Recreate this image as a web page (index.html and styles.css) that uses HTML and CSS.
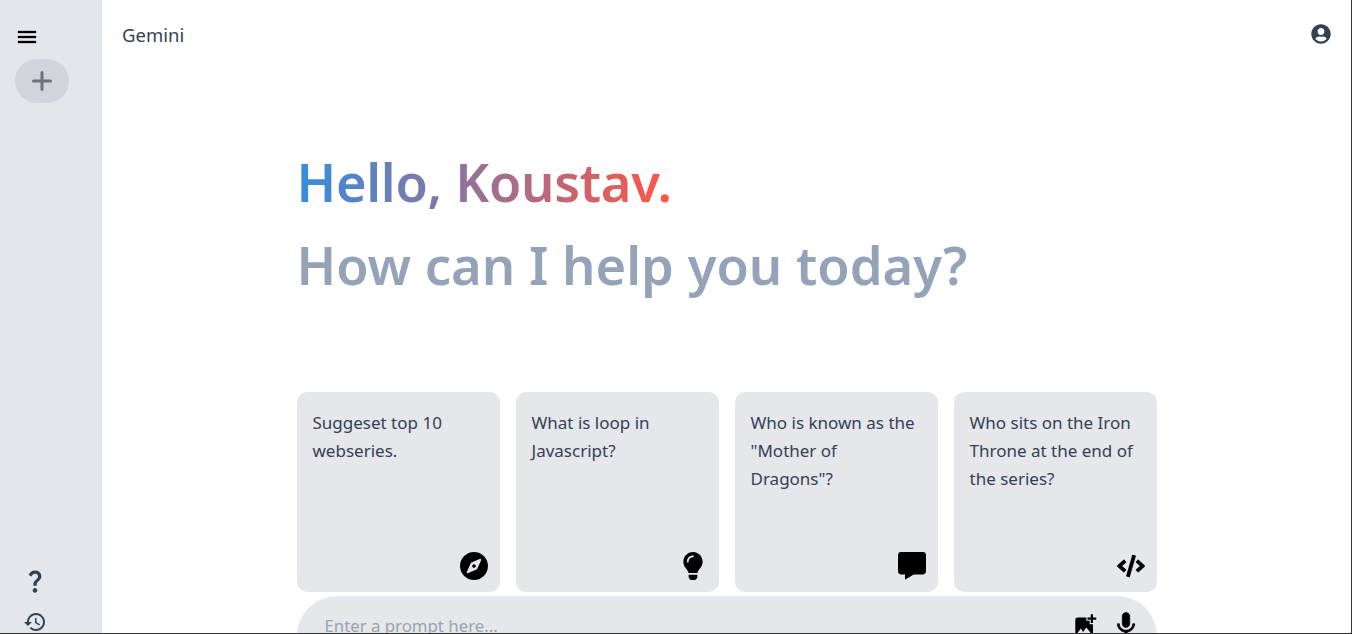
FILE: index.html
```html
<!DOCTYPE html>
<html lang="en">
<head>
    <meta charset="UTF-8">
    <meta name="viewport" content="width=device-width, initial-scale=1.0">
    <title>Gemini</title>
    <link rel="stylesheet" href="styles.css">
</head>
<body>

    <div class="app">
        <aside class="sidebar">
            <div class="side-top">
                <svg class="menu-icon" viewBox="0 0 24 24"><path d="M3 18h18v-2H3v2zm0-5h18v-2H3v2zm0-7v2h18V6H3z"/></svg>
                <button class="new-chat">
                    <svg viewBox="0 0 20 20"><path d="M10 1.5v17M1.5 10h17"/></svg>
                </button>
            </div>
            <div class="side-bottom">
                <svg class="help-icon" viewBox="0 0 24 24"><path d="M11.07,12.85c0.77-1.39,2.25-2.21,3.11-3.44c0.91-1.29,0.4-3.7-2.18-3.7c-1.69,0-2.52,1.28-2.87,2.34L6.54,6.96 C7.25,4.83,9.18,3,11.99,3c2.35,0,3.96,1.07,4.78,2.41c0.7,1.15,1.11,3.3,0.03,4.9c-1.2,1.77-2.35,2.31-2.97,3.45 c-0.25,0.46-0.35,0.76-0.35,2.24h-2.89C10.58,15.22,10.46,13.95,11.07,12.85z M14,20c0,1.1-0.9,2-2,2s-2-0.9-2-2c0-1.1,0.9-2,2-2 S14,18.9,14,20z"/></svg>
                <svg class="history-icon" viewBox="0 0 24 24"><path d="M13 3c-4.97 0-9 4.03-9 9H1l3.89 3.89.07.14L9 12H6c0-3.87 3.13-7 7-7s7 3.13 7 7-3.13 7-7 7c-1.93 0-3.68-.79-4.94-2.06l-1.42 1.42C8.27 19.99 10.51 21 13 21c4.97 0 9-4.03 9-9s-4.03-9-9-9zm-1 5v5l4.28 2.54.72-1.21-3.5-2.08V8H12z"/></svg>
            </div>
        </aside>

        <main class="main">
            <nav class="topbar">
                <p class="brand">Gemini</p>
                <svg class="user-icon" viewBox="0 0 496 512"><path d="M248 8C111 8 0 119 0 256s111 248 248 248 248-111 248-248S385 8 248 8zm0 96c48.6 0 88 39.4 88 88s-39.4 88-88 88-88-39.4-88-88 39.4-88 88-88zm0 344c-58.7 0-111.3-26.6-146.5-68.2 18.8-35.4 55.6-59.8 98.5-59.8 2.4 0 4.8.4 7.1 1.1 13 4.2 26.6 6.9 40.9 6.9 14.3 0 28-2.7 40.9-6.9 2.3-.7 4.7-1.1 7.1-1.1 42.9 0 79.7 24.4 98.5 59.8C359.3 421.4 306.7 448 248 448z"/></svg>
            </nav>

            <div class="content">
                <div class="greet">
                    <p class="hello"><span>Hello, Koustav.</span></p>
                    <p class="ask">How can I help you today?</p>
                </div>

                <div class="cards">
                    <div class="card">
                        <p>Suggeset top 10 webseries.</p>
                        <svg class="card-icon" viewBox="0 8 496 496"><path d="M225.38 233.37c-12.5 12.5-12.5 32.76 0 45.25 12.49 12.5 32.76 12.5 45.25 0 12.5-12.5 12.5-32.76 0-45.25-12.5-12.49-32.76-12.49-45.25 0zM248 8C111 8 0 119 0 256s111 248 248 248 248-111 248-248S385 8 248 8zm126.14 148.05L308.17 300.4a31.938 31.938 0 0 1-15.77 15.77l-144.34 65.97c-16.65 7.61-33.81-9.55-26.2-26.2l65.98-144.35a31.938 31.938 0 0 1 15.77-15.77l144.34-65.97c16.65-7.6 33.8 9.55 26.19 26.2z"/></svg>
                    </div>
                    <div class="card">
                        <p>What is loop in Javascript?</p>
                        <svg class="card-icon" viewBox="-80 0 512 512"><path d="M96.06 454.35c.01 6.29 1.87 12.45 5.36 17.69l17.09 25.69a31.99 31.99 0 0 0 26.64 14.28h61.71a31.99 31.99 0 0 0 26.64-14.28l17.09-25.69a31.989 31.989 0 0 0 5.36-17.69l.04-38.35H96.01l.05 38.35zM0 176c0 44.37 16.45 84.85 43.56 115.78 16.52 18.85 42.36 58.23 52.21 91.45.04.26.07.52.11.78h160.24c.04-.26.07-.51.11-.78 9.85-33.22 35.69-72.6 52.21-91.45C335.55 260.85 352 220.37 352 176 352 78.61 272.91-.3 175.45 0 73.44.31 0 82.97 0 176zm176-80c-44.11 0-80 35.89-80 80 0 8.84-7.16 16-16 16s-16-7.16-16-16c0-61.76 50.24-112 112-112 8.84 0 16 7.16 16 16s-7.16 16-16 16z"/></svg>
                    </div>
                    <div class="card">
                        <p>Who is known as the "Mother of Dragons"?</p>
                        <svg class="card-icon" viewBox="2 2 20 20"><path d="M20 2H4c-1.103 0-2 .897-2 2v12c0 1.103.897 2 2 2h3v3.767L13.277 18H20c1.103 0 2-.897 2-2V4c0-1.103-.897-2-2-2z"/></svg>
                    </div>
                    <div class="card">
                        <p>Who sits on the Iron Throne at the end of the series?</p>
                        <svg class="card-icon" viewBox="0 0 640 512"><path d="M278.9 511.5l-61-17.7c-6.4-1.8-10-8.5-8.2-14.9L346.2 8.7c1.8-6.4 8.5-10 14.9-8.2l61 17.7c6.4 1.8 10 8.5 8.2 14.9L293.8 503.3c-1.9 6.4-8.5 10.1-14.9 8.2zm-114-112.2l43.5-46.4c4.6-4.9 4.3-12.7-.8-17.2L117 256l90.6-79.7c5.1-4.5 5.5-12.3.8-17.2l-43.5-46.4c-4.5-4.8-12.1-5.1-17-.5L3.8 247.2c-5.1 4.7-5.1 12.8 0 17.5l144.1 135.1c4.9 4.6 12.5 4.4 17-.5zm327.2.6l144.1-135.1c5.1-4.7 5.1-12.8 0-17.5L492.1 112.1c-4.8-4.5-12.4-4.3-17 .5L431.6 159c-4.6 4.9-4.3 12.7.8 17.2L523 256l-90.6 79.7c-5.1 4.5-5.5 12.3-.8 17.2l43.5 46.4c4.5 4.9 12.1 5.1 17 .6z"/></svg>
                    </div>
                </div>

                <div class="prompt-bar">
                    <input class="prompt-input" type="text" placeholder="Enter a prompt here...">
                    <svg class="prompt-icon" viewBox="0 0 24 24"><path d="M19 7v2.99s-1.99.01-2 0V7h-3s.01-1.99 0-2h3V2h2v3h3v2h-3zm-3 4V8h-3V5H5c-1.1 0-2 .9-2 2v12c0 1.1.9 2 2 2h12c1.1 0 2-.9 2-2v-8h-3zM5 19l3-4 2 3 3-4 4 5H5z"/></svg>
                    <svg class="prompt-icon mic" viewBox="0 0 24 24"><path d="M12 14c1.66 0 2.99-1.34 2.99-3L15 5c0-1.66-1.34-3-3-3S9 3.34 9 5v6c0 1.66 1.34 3 3 3zm5.3-3c0 3-2.54 5.1-5.3 5.1S6.7 14 6.7 11H5c0 3.41 2.72 6.23 6 6.72V21h2v-3.28c3.28-.48 6-3.3 6-6.72h-1.7z"/></svg>
                </div>
            </div>
        </main>
    </div>

</body>
</html>
```

FILE: styles.css
```css
* {
    box-sizing: border-box;
}

html, body {
    height: 100%;
    margin: 0;
    overflow: hidden;
}

body {
    font-family: "Noto Sans", "Open Sans", Arial, sans-serif;
    background: white;
    color: #334155;
}

p {
    margin: 0;
}

/* window edge seen on the right and bottom */
.app {
    display: flex;
    height: 100vh;
    border-right: 1px solid #333;
    border-bottom: 1px solid #333;
    overflow: hidden;
}

/* Sidebar */
.sidebar {
    width: 102px;
    flex-shrink: 0;
    display: flex;
    flex-direction: column;
    justify-content: space-between;
    padding: 25px 0 0 15px;
    background: #e3e6eb;
}

.side-top {
    display: flex;
    flex-direction: column;
    align-items: flex-start;
    gap: 10px;
}

.menu-icon {
    width: 24px;
    height: 24px;
    fill: black;
    stroke: black;
    stroke-width: 0.3;
}

.new-chat {
    width: 54px;
    height: 44px;
    display: flex;
    align-items: center;
    justify-content: center;
    padding: 0;
    border: none;
    border-radius: 22px;
    background: #d1d5db;
}

.new-chat svg {
    width: 20px;
    height: 20px;
    fill: none;
    stroke: #6b7280;
    stroke-width: 3;
    stroke-linecap: round;
}

.side-bottom {
    display: flex;
    flex-direction: column;
    align-items: center;
    width: 40px;
    gap: 15px;
    margin-bottom: -1px;
}

.help-icon {
    width: 28px;
    height: 28px;
    fill: #334155;
}

.history-icon {
    width: 24px;
    height: 24px;
    fill: #334155;
}

/* Main area */
.main {
    flex: 1;
    min-width: 0;
    display: flex;
    flex-direction: column;
}

.topbar {
    display: flex;
    align-items: flex-start;
    justify-content: space-between;
    padding: 20px 20px 0;
}

.brand {
    font-size: 18.5px;
    line-height: 30px;
}

.user-icon {
    width: 20px;
    height: 20px;
    margin-top: 4px;
    fill: #334155;
}

.content {
    width: 860px;
    margin: 0 auto;
}

.greet {
    padding-top: 90px;
    font-size: 52.5px;
    font-weight: 600;
    line-height: 83px;
}

.hello span {
    letter-spacing: -0.3px;
    background: linear-gradient(90deg, #368ddf, #ff5546);
    -webkit-background-clip: text;
    background-clip: text;
    color: transparent;
}

.ask {
    color: #94a3b8;
}

.cards {
    display: grid;
    grid-template-columns: repeat(4, 1fr);
    gap: 16px;
    margin-top: 86px;
}

.card {
    height: 200px;
    display: flex;
    flex-direction: column;
    justify-content: space-between;
    padding: 17px 16px 16px;
    border-radius: 10px;
    background: #e5e7eb;
    font-size: 17px;
    line-height: 28px;
}

.card-icon {
    width: 28px;
    height: 28px;
    margin: 0 -4px -4px 0;
    align-self: flex-end;
    fill: black;
}

/* Prompt bar, runs off the bottom of the window */
.prompt-bar {
    display: flex;
    align-items: flex-start;
    gap: 12px;
    height: 80px;
    margin-top: 4px;
    padding: 14px 16px 0 28px;
    border-radius: 40px;
    background: #e5e7eb;
}

.prompt-input {
    flex: 1;
    min-width: 0;
    height: 30px;
    padding: 0;
    border: none;
    outline: none;
    background: transparent;
    font-family: inherit;
    font-size: 16.8px;
}

.prompt-input::placeholder {
    color: #9ca3af;
}

.prompt-icon {
    width: 26.5px;
    height: 26.5px;
    margin-top: 2px;
    flex-shrink: 0;
    fill: black;
}

.prompt-icon.mic {
    width: 30px;
    height: 30px;
    margin-top: 0;
    stroke: black;
    stroke-width: 0.5;
}
```
